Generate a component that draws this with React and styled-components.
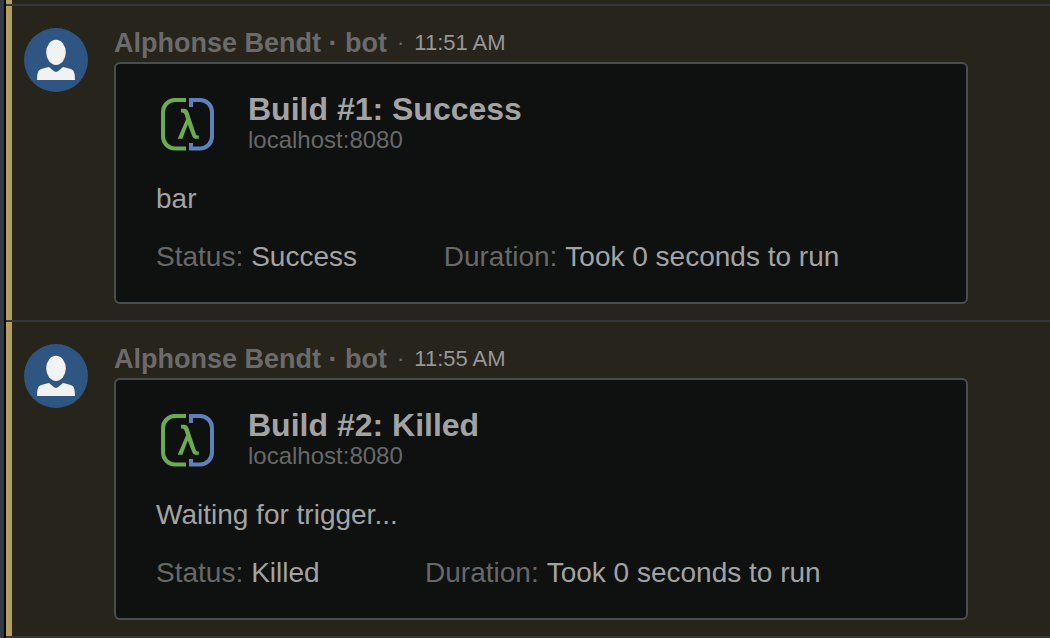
import React from "react";
import styled, { createGlobalStyle } from "styled-components";

const GlobalStyle = createGlobalStyle`
  * { box-sizing: border-box; }
  body {
    margin: 0;
    background: #27241c;
    font-family: "Liberation Sans", Arial, sans-serif;
  }
  h2, p, dl, dt, dd, ul { margin: 0; padding: 0; }
`;

const Page = styled.main`
  display: flex;
  min-height: 100vh;
  overflow: hidden;
  background: #27241c;
`;

const Rail = styled.div`
  flex: none;
  width: 6px;
  background: #343a44;
  border-right: 2px solid #050505;
`;

const Feed = styled.ul`
  flex: 1;
  min-width: 0;
  list-style: none;
`;

const Marker = styled.div`
  flex: none;
  width: 6px;
  background: #b69e62;
`;

const PreviousMessage = styled.li`
  display: flex;
  height: 4px;
`;

const MessageRow = styled.li`
  display: flex;
  border-top: 2px solid #34373b;

  &:last-child {
    border-bottom: 2px solid #34373b;
  }
`;

const Content = styled.article`
  flex: 1;
  min-width: 0;
  display: flex;
  gap: 26px;
  padding: 22px 82px 16px 12px;
`;

const Avatar = styled.svg`
  flex: none;
  width: 64px;
  height: 64px;
`;

const Body = styled.div`
  flex: 1;
  min-width: 0;
`;

const Header = styled.header`
  display: flex;
  gap: 10px;
  height: 34px;
  line-height: 30px;
  font-size: 22px;
  color: #6b6b6b;
  white-space: nowrap;
`;

const Author = styled.strong`
  font-size: 27px;
`;

const Time = styled.time`
  color: #979797;
`;

const Card = styled.section`
  padding: 28px 40px;
  background: #0e1110;
  border: 2px solid #484e50;
  border-radius: 6px;
  color: #a3a3a3;
  font-size: 28px;
  line-height: 34px;
`;

const CardHead = styled.div`
  display: flex;
  gap: 28px;
  margin-bottom: 26px;
`;

const Logo = styled.svg`
  flex: none;
  width: 64px;
  height: 64px;
`;

const Title = styled.h2`
  font-size: 32px;
  line-height: 34px;
`;

const Host = styled.p`
  font-size: 24px;
  line-height: 28px;
  color: #686868;
`;

const Fields = styled.dl`
  display: flex;
  margin-top: 24px;
`;

const Field = styled.div`
  display: flex;
  flex: 1 1 auto;
  gap: 8px;
  white-space: nowrap;
`;

const Label = styled.dt`
  color: #686868;
`;

function BuildLogo() {
  return (
    <Logo viewBox="0 0 64 64" fill="none" aria-hidden="true">
      <path d="M30 8H19A12 12 0 0 0 7 20V44.5A12 12 0 0 0 19 56.5H30" stroke="#6dab51" strokeWidth="4" />
      <path d="M35 15V8H44A12 12 0 0 1 56 20V44.5A12 12 0 0 1 44 56.5H35V51" stroke="#5f80ba" strokeWidth="4" />
      <path
        d="M25 16.8H28Q31.3 16.8 32.5 20.2L39.5 41.2Q40.2 43.4 41.3 43.4H42.8V46.8H39.4Q37.2 46.8 36.3 44.2L31.8 32.4L26.4 46.8H21.7L30.1 27.2L28.9 23.2Q28 20.4 26.4 20.4H25Z"
        fill="#6dab51"
      />
    </Logo>
  );
}

function UserAvatar() {
  return (
    <Avatar viewBox="0 0 64 64" role="img" aria-label="Alphonse Bendt">
      <circle cx="32" cy="32" r="32" fill="#2f5683" />
      <ellipse cx="32" cy="24.3" rx="9.8" ry="12.6" fill="#f2f2f2" />
      <path d="M13 52C13.1 47 13.6 43.8 15 42.3C16.8 40.6 20.5 40 25 39L29.2 42.6Q32 45.2 34.8 42.6L39 39C43.5 40 47.2 40.6 49 42.3C50.4 43.8 50.9 47 51 52Z" fill="#f2f2f2" />
    </Avatar>
  );
}

function Message({ time, title, text, status }) {
  return (
    <MessageRow>
      <Marker />
      <Content>
        <UserAvatar />
        <Body>
          <Header>
            <Author>Alphonse Bendt · bot</Author>
            <span>·</span>
            <Time>{time}</Time>
          </Header>
          <Card>
            <CardHead>
              <BuildLogo />
              <div>
                <Title>{title}</Title>
                <Host>localhost:8080</Host>
              </div>
            </CardHead>
            <p>{text}</p>
            <Fields>
              <Field>
                <Label>Status:</Label>
                <dd>{status}</dd>
              </Field>
              <Field>
                <Label>Duration:</Label>
                <dd>Took 0 seconds to run</dd>
              </Field>
            </Fields>
          </Card>
        </Body>
      </Content>
    </MessageRow>
  );
}

export default function App() {
  return (
    <>
      <GlobalStyle />
      <Page>
        <Rail />
        <Feed>
          <PreviousMessage>
            <Marker />
          </PreviousMessage>
          <Message time="11:51 AM" title="Build #1: Success" text="bar" status="Success" />
          <Message time="11:55 AM" title="Build #2: Killed" text="Waiting for trigger..." status="Killed" />
        </Feed>
      </Page>
    </>
  );
}
